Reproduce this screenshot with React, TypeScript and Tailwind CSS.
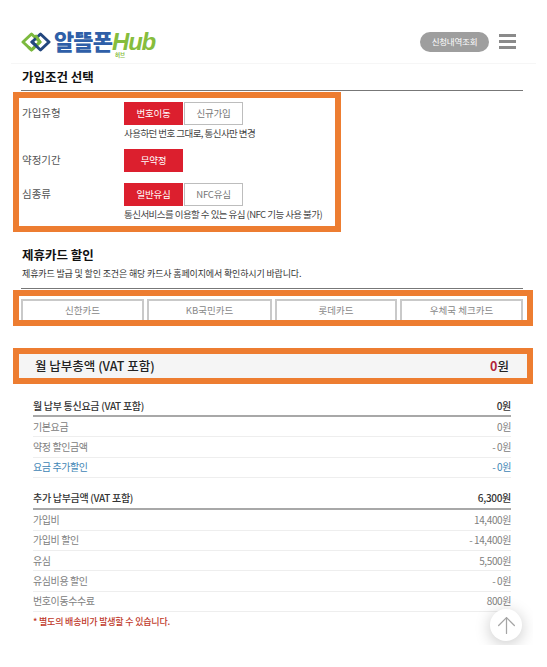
import React from 'react';
import { ArrowUp } from 'lucide-react';

const KR = "font-['Noto_Sans_CJK_KR','Noto_Sans',sans-serif]";

const monthlyRows = [
  { label: '기본요금', value: '0원' },
  { label: '약정 할인금액', value: '- 0원' },
  { label: '요금 추가할인', value: '- 0원', accent: true },
];

const extraRows = [
  { label: '가입비', value: '14,400원' },
  { label: '가입비 할인', value: '- 14,400원' },
  { label: '유심', value: '5,500원' },
  { label: '유심비용 할인', value: '- 0원' },
  { label: '번호이동수수료', value: '800원' },
];

const cards = [
  { name: '신한카드', width: 'w-[123px]' },
  { name: 'KB국민카드', width: 'w-[125px]' },
  { name: '롯데카드', width: 'w-[122px]' },
  { name: '우체국 체크카드', width: 'w-[123px]' },
];

const OptionButton = ({ label, active = false }: { label: string; active?: boolean }) => (
  <div
    className={`flex h-[23px] w-[59px] items-center justify-center text-[9.5px] tracking-[-0.2px] ${
      active ? 'bg-[#dc1f2e] text-white' : 'border border-[#bdbdbd] bg-white text-[#777]'
    }`}
  >
    {label}
  </div>
);

const FeeRow = ({ label, value, accent }: { label: string; value: string; accent?: boolean }) => (
  <div className="flex h-[20.4px] items-center justify-between border-b border-[#eeeeee] pb-[1px] text-[10px] tracking-[-0.4px] text-[#808080]">
    <span className={accent ? 'text-[#3f86b5]' : ''}>{label}</span>
    <span className={accent ? 'text-[#3f86b5]' : ''}>{value}</span>
  </div>
);

const FeeHeader = ({ label, value, className = '' }: { label: string; value: string; className?: string }) => (
  <div className={`flex items-center justify-between border-b-2 border-[#a8a8a8] text-[10px] font-medium tracking-[-0.3px] text-[#333] ${className}`}>
    <span>{label}</span>
    <span>{value}</span>
  </div>
);

const Logo = () => (
  <div className="flex items-center">
    <svg width="30" height="20" viewBox="0 0 30 20" fill="none" strokeWidth="3" strokeLinejoin="round" strokeLinecap="round">
      <path d="M10.5 2 L2 10 L10.5 18 L19 10 Z" stroke="#7cb93e" />
      <path d="M19.5 2 L11 10 L19.5 18 L28 10 Z" stroke="#23477f" />
      {/* green passes over navy on the lower left, so the two rings interlock */}
      <path d="M13 15.6 L10.5 18 L8 15.6" stroke="#7cb93e" />
      <path d="M15 4.2 L19 10 L15.5 13.4" stroke="#7cb93e" />
      <path d="M11 10 L15.5 14.2" stroke="#23477f" />
    </svg>
    <span className="relative ml-[3px] flex items-baseline leading-none">
      <span className="text-[22px] font-black tracking-[-0.9px] text-[#2f5fa8]">알뜰폰</span>
      <span className="font-['Liberation_Sans',sans-serif] text-[24px] font-bold italic tracking-[-1.2px] text-[#86bd3c]">Hub</span>
      <span className="absolute left-[61px] top-[24px] text-[5.5px] font-bold leading-none text-[#86bd3c]">허브</span>
    </span>
  </div>
);

export default function App() {
  return (
    <div className={`relative h-[667px] w-[547px] overflow-hidden bg-white ${KR}`}>
      {/* Header */}
      <header className="mx-[11px] mt-[20px] flex h-[44px] items-center justify-between border-b border-[#f6f6f6] pl-[10px] pr-[20px]">
        <Logo />
        <div className="flex items-center gap-[10px]">
          <div className="flex h-[20px] w-[69px] items-center justify-center rounded-full bg-[#9e9e9e] text-[8.5px] tracking-[-0.2px] text-white">
            신청내역조회
          </div>
          <div className="flex w-[17px] flex-col gap-[3.5px]">
            <span className="h-[2.5px] bg-[#8a8a8a]" />
            <span className="h-[2.5px] bg-[#8a8a8a]" />
            <span className="h-[2.5px] bg-[#8a8a8a]" />
          </div>
        </div>
      </header>

      {/* Join conditions */}
      <div className="mx-[21px] flex h-[27px] w-[502px] items-center border-b border-[#777] pl-[1px] text-[12.5px] font-bold text-[#111]">
        가입조건 선택
      </div>
      <div className="ml-[13px] mt-[1px] h-[140px] w-[328px] border-[6px] border-[#ed7d31] pl-[3px] pt-[4px]">
        <div className="flex">
          <div className="w-[102px] pt-[2px] text-[10.5px] leading-[17px] text-[#555]">가입유형</div>
          <div className="flex gap-[1px]">
            <OptionButton label="번호이동" active />
            <OptionButton label="신규가입" />
          </div>
        </div>
        <div className="ml-[102px] mt-[1px] h-[15px] text-[9.5px] leading-[15px] tracking-[-0.55px] text-[#444]">
          사용하던 번호 그대로, 통신사만 변경
        </div>
        <div className="mt-[8px] flex">
          <div className="w-[102px] pt-[2px] text-[10.5px] leading-[17px] text-[#555]">약정기간</div>
          <OptionButton label="무약정" active />
        </div>
        <div className="mt-[11px] flex">
          <div className="w-[102px] pt-[2px] text-[10.5px] leading-[17px] text-[#555]">심종류</div>
          <div className="flex gap-[1px]">
            <OptionButton label="일반유심" active />
            <OptionButton label="NFC유심" />
          </div>
        </div>
        <div className="ml-[102px] mt-[1px] h-[15px] whitespace-nowrap text-[9.5px] leading-[15px] tracking-[-0.55px] text-[#444]">
          통신서비스를 이용할 수 있는 유심 (NFC 기능 사용 불가)
        </div>
      </div>

      {/* Partner cards */}
      <div className="mx-[21px] mt-[14px] h-[43px] w-[502px] border-b border-[#777] pl-[1px]">
        <div className="h-[18px] text-[12.5px] font-bold leading-[18px] text-[#111]">제휴카드 할인</div>
        <div className="mt-[2px] h-[16px] text-[9px] leading-[16px] tracking-[-0.15px] text-[#333]">
          제휴카드 발급 및 할인 조건은 해당 카드사 홈페이지에서 확인하시기 바랍니다.
        </div>
      </div>
      <div className="ml-[13px] mt-[1px] flex h-[36px] w-[520px] gap-[3px] overflow-hidden border-[6px] border-[#ed7d31] pl-[2px] pt-[3px]">
        {cards.map(({ name, width }) => (
          <div
            key={name}
            className={`flex h-[30px] shrink-0 items-start justify-center border-2 border-[#c9c9c9] pt-[2px] text-[9.5px] leading-[14px] text-[#888] ${width}`}
          >
            {name}
          </div>
        ))}
      </div>

      {/* Monthly total */}
      <div className="ml-[13px] mt-[22px] flex h-[36px] w-[520px] items-center justify-between border-[6px] border-[#ed7d31] bg-[#f5f5f5] pl-[16px] pr-[18px] text-[12.5px] font-medium text-[#222]">
        <span>월 납부총액 (VAT 포함)</span>
        <span>
          <span className="font-bold text-[#b3253a]">0</span>원
        </span>
      </div>

      {/* Fee list */}
      <div className="ml-[33px] mt-[11px] w-[478px]">
        <FeeHeader label="월 납부 통신요금 (VAT 포함)" value="0원" className="h-[22px]" />
        {monthlyRows.map((row) => (
          <FeeRow key={row.label} {...row} />
        ))}
        <FeeHeader label="추가 납부금액 (VAT 포함)" value="6,300원" className="mt-[9px] h-[23px]" />
        {extraRows.map((row) => (
          <FeeRow key={row.label} {...row} />
        ))}
        <div className="flex h-[20px] items-center text-[9px] font-medium tracking-[-0.2px] text-[#c0392b]">
          * 별도의 배송비가 발생할 수 있습니다.
        </div>
      </div>

      {/* Scroll to top, its shadow is cut off by the frame around it */}
      <div className="absolute left-[460px] top-[590px] h-[55px] w-[73px] overflow-hidden pl-[30px] pt-[19px]">
        <div className="flex h-[32px] w-[32px] items-center justify-center rounded-full bg-white shadow-[0_3px_16px_rgba(0,0,0,0.22)]">
          <ArrowUp size={27} strokeWidth={1.1} className="text-[#a5a5a5]" />
        </div>
      </div>
    </div>
  );
}
